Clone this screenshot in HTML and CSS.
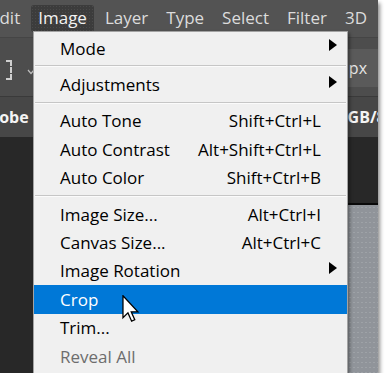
FILE: index.html
```html
<!DOCTYPE html>
<html lang="en">
    <head>
        <meta charset="utf-8"/>
        <title>Image menu</title>
        <link rel="stylesheet" href="styles.css">
    </head>
    <body>
        <div class="shot">
            <div class="menubar">
                <span class="mb-item">Edit</span>
                <span class="mb-item active">Image</span>
                <span class="mb-item">Layer</span>
                <span class="mb-item">Type</span>
                <span class="mb-item">Select</span>
                <span class="mb-item">Filter</span>
                <span class="mb-item">3D</span>
            </div>
            <div class="options">
                <span class="marquee"></span>
                <svg class="chev" width="8" height="6" viewBox="0 0 8 6"><path d="M1 1 L4 4.5 L7 1" fill="none" stroke="#bdbdbd" stroke-width="1.2"/></svg>
                <span class="field">0 px</span>
            </div>
            <div class="tabs">
                <span class="tab-l">Adobe</span>
                <span class="tab-r">RGB/8)</span>
            </div>
            <div class="workspace">
                <div class="ws-left"></div>
                <div class="ws-right">
                    <div class="ws-dark"></div>
                    <div class="ws-doc"></div>
                </div>
            </div>

            <!--dropdown-->
            <div class="dropdown">
                <div class="item sub">Mode</div>
                <div class="sep"></div>
                <div class="item sub">Adjustments</div>
                <div class="sep"></div>
                <div class="item"><span>Auto Tone</span><span>Shift+Ctrl+L</span></div>
                <div class="item"><span>Auto Contrast</span><span>Alt+Shift+Ctrl+L</span></div>
                <div class="item"><span>Auto Color</span><span>Shift+Ctrl+B</span></div>
                <div class="sep"></div>
                <div class="item"><span>Image Size...</span><span>Alt+Ctrl+I</span></div>
                <div class="item"><span>Canvas Size...</span><span>Alt+Ctrl+C</span></div>
                <div class="item sub">Image Rotation</div>
                <div class="item hover">Crop</div>
                <div class="item">Trim...</div>
                <div class="item disabled">Reveal All</div>
            </div>

            <svg class="cursor" width="19" height="27" viewBox="0 0 13 19">
                <path d="M0.5 0.5 L0.5 16 L4 12.6 L6.6 18.4 L8.8 17.4 L6.3 11.8 L11 11.8 Z" fill="#fff" stroke="#000" stroke-width="0.9" stroke-linejoin="miter"/>
            </svg>
        </div>
    </body>
</html>
```

FILE: styles.css
```css
body {
    margin: 0;
    background: #fff;
}

.shot {
    position: relative;
    width: 378px;
    height: 373px;
    overflow: hidden;
    background: #282828;
    box-shadow: 2px 3px 4px rgba(0,0,0,.45);
    font-family: "Open Sans", "Noto Sans", sans-serif;
}

.menubar {
    display: flex;
    gap: 4px;
    height: 37px;
    padding-top: 5px;
    box-sizing: border-box;
    margin-left: -17px;
    background: #535353;
    font-size: 17px;
    color: #dcdcdc;
}

.mb-item {
    height: 27px;
    line-height: 26px;
    padding: 0 7px;
    border-radius: 3px;
    white-space: nowrap;
}

.mb-item.active {
    color: #f2f2f2;
    background-color: #3c3c3c;
    background-image: radial-gradient(#4a4a4a 0.6px, transparent 0.8px);
    background-size: 3px 3px;
}

.options {
    display: flex;
    align-items: center;
    height: 60px;
    box-sizing: border-box;
    border-top: 1px solid #454545;
    border-bottom: 1px solid #3a3a3a;
    background: #4d4d4d;
}

.marquee {
    width: 14px;
    height: 16px;
    margin-left: -6px;
    margin-top: 6px;
    border: 2px dashed #cfcfcf;
}

.chev {
    margin-left: 15px;
    margin-top: 10px;
}

.field {
    margin-left: auto;
    width: 70px;
    height: 38px;
    margin-top: 2px;
    box-sizing: border-box;
    padding-right: 11px;
    line-height: 38px;
    text-align: right;
    background: #5a5a5a;
    color: #e6e6e6;
    font-size: 16px;
}

.tabs {
    display: flex;
    justify-content: space-between;
    height: 40px;
    line-height: 40px;
    background: #474747;
    color: #f4f4f4;
    font-weight: 700;
    font-size: 16px;
    white-space: nowrap;
}

.tab-l {
    margin-left: -22px;
}

.tab-r {
    width: 41px;
}

.workspace {
    display: flex;
    height: 236px;
}

.ws-left {
    width: 200px;
}

.ws-right {
    flex: 1;
    display: flex;
    flex-direction: column;
}

.ws-dark {
    height: 66px;
    border-left: 1px dashed #555;
    border-bottom: 2px solid #0a0a0a;
}

.ws-doc {
    flex: 1;
    background-color: #90949a;
    background-image: radial-gradient(#9ea2a7 0.6px, transparent 0.9px);
    background-size: 4px 5px;
}

/* the open Image menu */
.dropdown {
    position: absolute;
    left: 33px;
    top: 31px;
    width: 315px;
    height: 345px;
    box-sizing: border-box;
    padding-top: 2px;
    background: #f0f0f0;
    border: 1px solid #a3a3a3;
    box-shadow: 2px 2px 3px rgba(0,0,0,.35);
    font-size: 17px;
    color: #000;
}

.item {
    display: flex;
    justify-content: space-between;
    align-items: center;
    height: 28.4px;
    padding: 0 26px;
    white-space: nowrap;
}

.item.sub::after {
    content: "";
    width: 0;
    height: 0;
    margin-right: -16px;
    margin-bottom: 6px;
    border-left: 8px solid #000;
    border-top: 6px solid transparent;
    border-bottom: 6px solid transparent;
}

.item.hover {
    background: #0078d7;
    color: #fff;
}

.item.disabled {
    color: #6d6d6d;
}

.sep {
    height: 1px;
    margin: 3px 1px;
    background: #c6c6c6;
    border-bottom: 1px solid #fbfbfb;
}

.cursor {
    position: absolute;
    left: 122px;
    top: 295px;
}
```
